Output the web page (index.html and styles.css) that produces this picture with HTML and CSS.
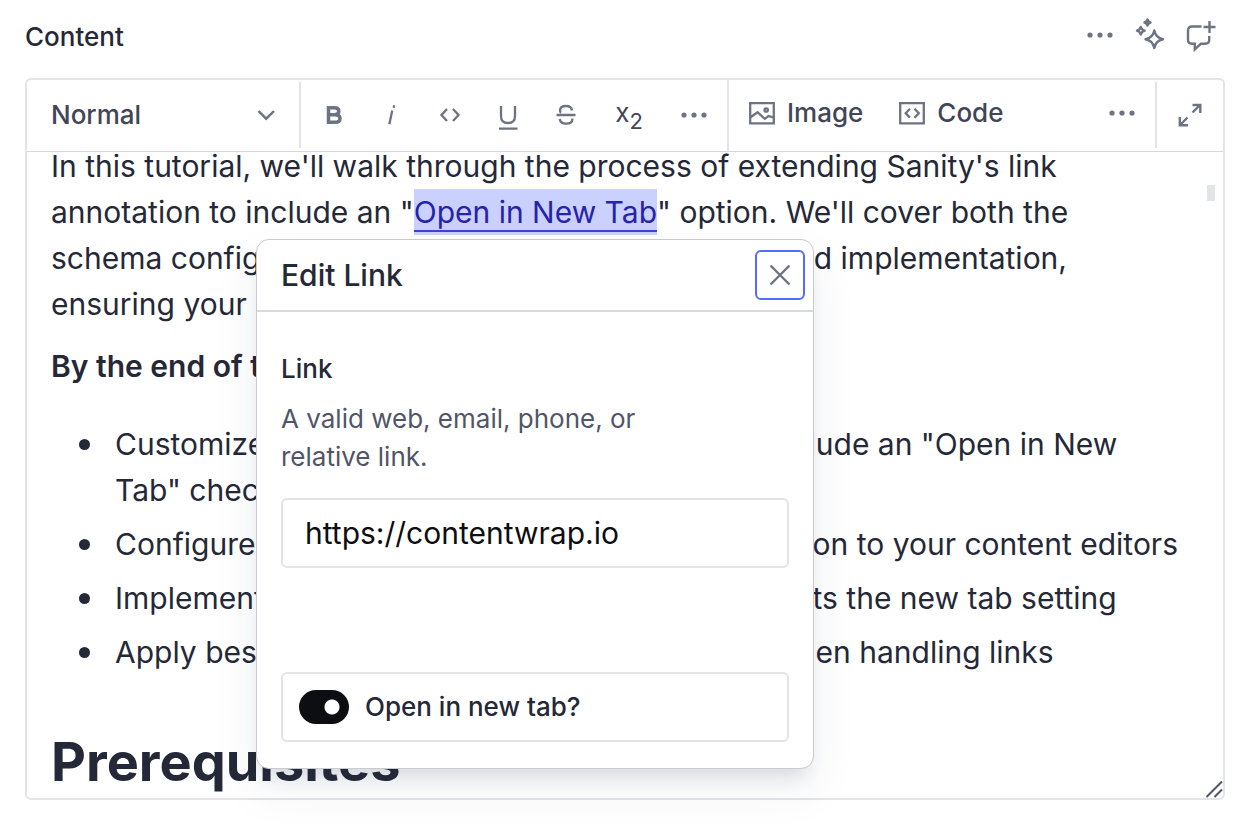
FILE: index.html
```html
<!DOCTYPE html>
<html lang="en">
<head>
<meta charset="utf-8">
<meta name="viewport" content="width=device-width, initial-scale=1">
<title>Content</title>
<link rel="stylesheet" href="styles.css">
</head>
<body>
<main class="field">
  <header class="field-header">
    <h2 class="field-title">Content</h2>
    <div class="field-actions">
      <button class="icon-button" type="button" aria-label="Field actions">
        <svg width="50" height="50" viewBox="0 0 50 50"><g fill="currentColor"><circle cx="15" cy="25" r="2.6"/><circle cx="25" cy="25" r="2.6"/><circle cx="35" cy="25" r="2.6"/></g></svg>
      </button>
      <button class="icon-button" type="button" aria-label="AI Assist">
        <svg width="50" height="50" viewBox="0 0 50 50" fill="none" stroke="currentColor" stroke-width="2.4" stroke-linejoin="round"><path d="M29.3 20.5Q30.6 27.800 38 29.200Q30.600 30.600 29.300 38Q28 30.600 20.500 29.200Q28 27.800 29.300 20.500Z"/><path d="M15.800 17Q16.600 20 19.700 20.700Q16.600 21.500 15.800 24.500Q15 21.500 12 20.700Q15 20 15.800 17Z"/><path d="M22.500 9.500Q23 12 25.500 12.500Q23 13 22.500 15.500Q22 13 19.500 12.500Q22 12 22.500 9.500Z"/></svg>
      </button>
      <button class="icon-button" type="button" aria-label="Add comment">
        <svg width="50" height="50" viewBox="0 0 50 50" fill="none" stroke="currentColor" stroke-width="2.4"><path d="M26.500 16.500H17Q13 16.500 13 20.500V30Q13 33.700 17 33.700H19.800V39.500L26 33.700H30Q34.200 33.700 34.200 30V26"/><path d="M34.500 11V23M28.500 17H40.500"/></svg>
      </button>
    </div>
  </header>

  <section class="editor" aria-label="Content editor">
    <div class="toolbar">
      <div class="style-picker">
        <select class="style-select" aria-label="Text style"><option>Normal</option></select>
        <svg class="style-caret" width="18" height="12" viewBox="0 0 18 12" fill="none" stroke="currentColor" stroke-width="2.4"><path d="M1.500 2L9.200 9.700L17 2"/></svg>
      </div>
      <div class="format-group">
        <button class="icon-button" type="button" aria-label="Bold"><svg width="50" height="50" viewBox="0 0 50 50" fill="none" stroke="currentColor" stroke-width="3.500"><path d="M19.500 17.700H25.300Q29.800 17.700 29.800 21.200Q29.800 24.700 25.300 24.700H19.500H26Q31 24.700 31 28.500Q31 32.300 26 32.300H19.500Z"/></svg></button>
        <button class="icon-button" type="button" aria-label="Italic"><svg width="50" height="50" viewBox="0 0 50 50" fill="none" stroke="currentColor" stroke-width="2.300"><path d="M25.300 20.500L22.300 34.300M27.200 15.200L26.700 17.800"/></svg></button>
        <button class="icon-button" type="button" aria-label="Inline code"><svg width="50" height="50" viewBox="0 0 50 50" fill="none" stroke="currentColor" stroke-width="2.300"><path d="M22 19L16.500 25L22 31M28 19L33.500 25L28 31"/></svg></button>
        <button class="icon-button" type="button" aria-label="Underline"><svg width="50" height="50" viewBox="0 0 50 50" fill="none" stroke="currentColor" stroke-width="2.300"><path d="M18 16V26Q18 33 25 33Q32 33 32 26V16M16 38.600H34.500"/></svg></button>
        <button class="icon-button" type="button" aria-label="Strikethrough"><svg width="50" height="50" viewBox="0 0 50 50" fill="none" stroke="currentColor" stroke-width="2.300"><path d="M31 20.500Q30.500 16 25 16Q19 16 19 20.500Q19 22 20 22.700M18.700 29Q19.500 33.700 25 33.700Q31.300 33.700 31.300 29.500V28.500M15.500 25H34.500"/></svg></button>
        <button class="icon-button subscript-button" type="button" aria-label="Subscript"><span class="subscript-mark">x<span class="subscript-digit">2</span></span></button>
        <button class="icon-button" type="button" aria-label="More formatting"><svg width="50" height="50" viewBox="0 0 50 50" fill="currentColor"><circle cx="15" cy="25" r="2.600"/><circle cx="25" cy="25" r="2.600"/><circle cx="35" cy="25" r="2.600"/></svg></button>
      </div>
      <div class="insert-group">
        <button class="insert-button" type="button"><svg width="26" height="26" viewBox="0 0 26 26" fill="none" stroke="currentColor" stroke-width="2.300"><path d="M1.200 3.200H24.800V23.300H1.200ZM1.200 17.500L8.500 12.200L15.800 18.800L19.500 16L24.800 17.700"/><circle cx="17.200" cy="10" r="1.700"/></svg><span class="insert-text">Image</span></button>
        <button class="insert-button" type="button"><svg width="26" height="26" viewBox="0 0 26 26" fill="none" stroke="currentColor" stroke-width="2.300"><path d="M1.200 3.200H24.800V23.300H1.200ZM11 8.800L6.700 13.200L11 17.600M15.500 8.800L19.800 13.200L15.500 17.600"/></svg><span class="insert-text">Code</span></button>
        <button class="icon-button more-inserts" type="button" aria-label="More inserts"><svg width="50" height="50" viewBox="0 0 50 50" fill="currentColor"><circle cx="15" cy="25" r="2.600"/><circle cx="25" cy="25" r="2.600"/><circle cx="35" cy="25" r="2.600"/></svg></button>
      </div>
      <div class="expand-group">
        <button class="icon-button" type="button" aria-label="Expand editor"><svg width="50" height="50" viewBox="0 0 50 50" fill="none" stroke="currentColor" stroke-width="2.400"><path d="M27.500 22.500L35.500 14.500M27.500 15H35.300V23M22.500 27.500L14.500 35.500M14.800 27V35.200H23"/></svg></button>
      </div>
    </div>

    <div class="document">
      <p class="lead">In this tutorial, we'll walk through the process of extending Sanity's link annotation to include an "<a class="annotation" href="https://contentwrap.io">Open in New Tab</a>" option. We'll cover both the schema configuration in Sanity Studio and the frontend implementation, ensuring your links behave as expected.</p>
      <p class="goal">By the end of this tutorial, you'll be able to:</p>
      <ul class="goals">
        <li>Customize Sanity's link annotation schema to include an "Open in New<br>Tab" checkbox option</li>
        <li>Configure the schema to expose the new tab option to your content editors</li>
        <li>Implement a frontend link component that respects the new tab setting</li>
        <li>Apply best practices for security and usability when handling links</li>
      </ul>
      <h1 class="section-title">Prerequisites</h1>
      <span class="scroll-thumb"></span>
      <svg class="resize-grip" width="18" height="18" viewBox="0 0 18 18" fill="none" stroke="currentColor" stroke-width="2"><path d="M1.500 17L17 1.500M9.500 17L17 9.500"/></svg>
    </div>

    <div class="dialog" role="dialog" aria-labelledby="dialog-title">
      <header class="dialog-header">
        <h2 class="dialog-title" id="dialog-title">Edit Link</h2>
        <button class="close-button" type="button" aria-label="Close"><svg width="22" height="22" viewBox="0 0 22 22" fill="none" stroke="currentColor" stroke-width="2.400"><path d="M1.500 1.500L20.500 20.500M20.500 1.500L1.500 20.500"/></svg></button>
      </header>
      <form class="dialog-body">
        <label class="input-label" for="link-url">Link</label>
        <p class="input-hint" id="link-hint">A valid web, email, phone, or relative link.</p>
        <input class="url-input" id="link-url" type="text" value="https://contentwrap.io" aria-describedby="link-hint">
        <label class="switch-row"><input class="switch" type="checkbox" role="switch" checked><span class="switch-text">Open in new tab?</span></label>
      </form>
    </div>
  </section>
</main>
</body>
</html>
```

FILE: styles.css
```css
* {
  box-sizing: border-box;
}

body {
  margin: 0;
  background: #fff;
  color: #252837;
  font-family: Inter, "Liberation Sans", sans-serif;
  font-size: 26px;
}

h1, h2, p, ul {
  margin: 0;
}

button, input, select {
  font: inherit;
}

button {
  padding: 0;
  border: 0;
  background: none;
  color: #6e7383;
  cursor: pointer;
}

svg {
  display: block;
  flex: none;
}

.field {
  padding: 10px 27px 26px 25px;
}

.field-header {
  display: flex;
  align-items: flex-start;
  justify-content: space-between;
  height: 68px;
}

.field-title {
  font-size: 26px;
  font-weight: 500;
  line-height: 54px;
}

.field-actions {
  display: flex;
}

.icon-button {
  width: 50px;
  height: 50px;
  flex: none;
}

.editor {
  position: relative;
  border: 2px solid #e3e4e8;
  border-radius: 6px;
}

.toolbar {
  display: flex;
  height: 72px;
  border-bottom: 1px solid #d6d7dd;
}

.style-picker {
  display: flex;
  align-items: center;
  width: 274px;
  height: 66px;
  margin-top: 2px;
  padding: 0 24px;
  border-right: 2px solid #e3e4e8;
}

.style-select {
  flex: 1;
  width: 0;
  padding: 0 0 2px;
  border: 0;
  appearance: none;
  background: none;
  color: #424556;
  font-weight: 500;
}

.style-caret {
  color: #6e7383;
}

.format-group {
  display: flex;
  gap: 8px;
  padding: 10px 8px;
}

.subscript-button {
  width: 60px;
  margin-right: 2px;
  color: #424556;
}

.subscript-mark {
  display: flex;
  justify-content: center;
  line-height: 46px;
}

.subscript-digit {
  font-size: 22px;
  line-height: 62px;
}

.insert-group {
  display: flex;
  flex: 1;
  gap: 36px;
  padding: 8px 8px 0 20px;
  border-left: 2px solid #e3e4e8;
}

.insert-button {
  display: flex;
  align-items: center;
  gap: 12px;
  height: 50px;
  font-weight: 500;
  color: #424556;
}

.insert-button svg {
  color: #6e7383;
}

.insert-text,
.switch-text {
  padding-bottom: 2px;
}

.more-inserts {
  margin-left: auto;
}

.expand-group {
  height: 66px;
  margin-top: 2px;
  padding: 8px;
  border-left: 2px solid #e3e4e8;
}

.document {
  position: relative;
  height: 646px;
  padding: 0 24px;
  overflow: hidden;
  font-size: 30px;
  line-height: 46px;
}

.lead {
  max-width: 1050px;
  margin-top: -9px;
}

.annotation {
  display: inline-block;
  height: 46px;
  background: linear-gradient(#4043c9, #4043c9) 0 41px / 100% 2px no-repeat, #cbd1ff;
  color: #2722aa;
  text-decoration: none;
}

.goal {
  margin-top: 16px;
  font-weight: 600;
}

.goals {
  display: grid;
  gap: 8px;
  margin: 32px 0 60px;
  padding-left: 64px;
  list-style: none;
}

.goals li::before {
  content: "";
  float: left;
  width: 11px;
  height: 11px;
  margin: 18px 0 0 -36px;
  border-radius: 50%;
  background: currentColor;
}

.section-title {
  font-size: 54px;
  font-weight: 700;
  line-height: 54px;
}

.scroll-thumb {
  position: absolute;
  top: 33px;
  right: 8px;
  width: 8px;
  height: 16px;
  background: #e3e4e8;
}

.resize-grip {
  position: absolute;
  right: 0;
  bottom: 0;
  color: #515565;
}

.dialog {
  position: absolute;
  top: 159px;
  left: 229px;
  width: 558px;
  border: 1px solid #c8cad1;
  border-radius: 13px;
  background: #fff;
  box-shadow: 0 14px 18px -8px rgba(40, 50, 80, 0.14), 0 20px 44px 4px rgba(40, 50, 80, 0.06);
}

.dialog-header {
  display: flex;
  align-items: center;
  justify-content: space-between;
  height: 72px;
  padding: 0 8px 0 24px;
  border-bottom: 2px solid #d9dae0;
}

.dialog-title {
  font-size: 30px;
  font-weight: 500;
}

.close-button {
  display: grid;
  place-items: center;
  width: 50px;
  height: 50px;
  border: 2px solid #556bfc;
  border-radius: 6px;
}

.dialog-body {
  display: flex;
  flex-direction: column;
  padding: 38px 24px 26px;
}

.input-label {
  font-weight: 500;
  line-height: 38px;
}

.input-hint {
  max-width: 400px;
  margin: 12px 0 22px;
  color: #515569;
  line-height: 38px;
}

.url-input {
  width: 100%;
  height: 70px;
  padding: 0 22px;
  border: 2px solid #e3e4e8;
  border-radius: 6px;
  background: #fff;
  color: #0d0e12;
  font-size: 30px;
}

.switch-row {
  display: flex;
  align-items: center;
  gap: 16px;
  height: 70px;
  margin-top: 104px;
  padding: 0 16px;
  border: 2px solid #e3e4e8;
  border-radius: 6px;
  font-weight: 500;
}

.switch {
  width: 50px;
  height: 34px;
  margin: 0;
  border-radius: 17px;
  appearance: none;
  background: radial-gradient(circle at 33px 17px, #fff 7px, transparent 8px) #0d0e12;
}
```
